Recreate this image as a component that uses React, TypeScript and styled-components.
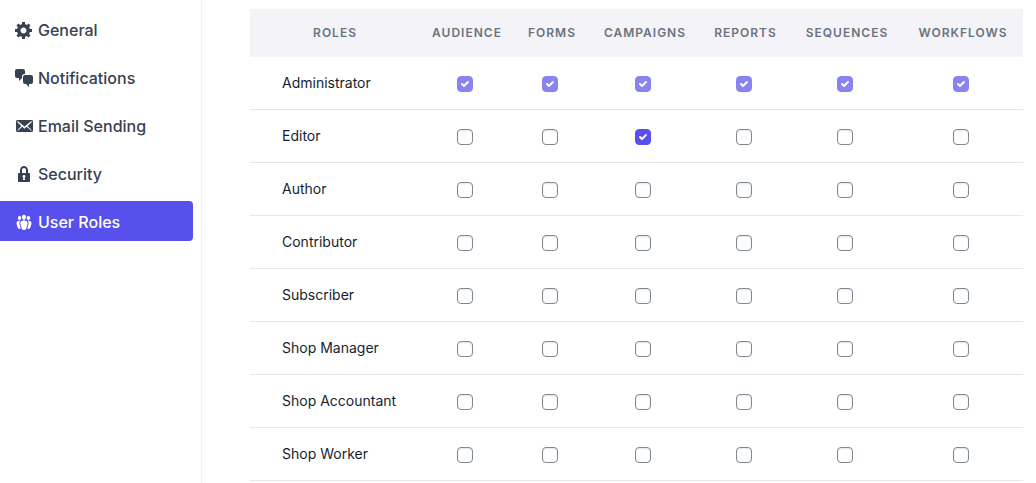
import React, { useState } from "react";
import styled, { createGlobalStyle } from "styled-components";

const GlobalStyle = createGlobalStyle`
  *, *::before, *::after { box-sizing: border-box; }
  body {
    margin: 0;
    background: #ffffff;
    color: #252f3f;
    font-family: Inter, "Liberation Sans", sans-serif;
  }
`;

const Page = styled.div`
  display: flex;
  min-height: 100vh;
`;

const Sidebar = styled.nav`
  flex: 0 0 202px;
  display: flex;
  flex-direction: column;
  gap: 8px;
  padding: 9px 8px 0 0;
  border-right: 1px solid #f1f1f5;
`;

const NavLink = styled.a<{ $active: boolean }>`
  display: flex;
  align-items: center;
  gap: 4px;
  height: 40px;
  padding: 2px 14px 0;
  border-radius: 0 4px 4px 0;
  background: ${(p) => (p.$active ? "#5850ec" : "transparent")};
  color: ${(p) => (p.$active ? "#ffffff" : "#374151")};
  font-size: 16px;
  font-weight: 500;
  line-height: 24px;
  text-decoration: none;
`;

const NavIcon = styled.svg`
  flex: none;
  width: 20px;
  height: 20px;
  fill: currentColor;
`;

const Main = styled.main`
  flex: 1;
  min-width: 0;
  padding: 9px 13px 0 48px;
`;

const RolesTable = styled.table`
  width: 100%;
  table-layout: fixed;
  border-collapse: separate;
  border-spacing: 0;
`;

const Column = styled.col<{ $width: number }>`
  width: ${(p) => p.$width}px;
`;

const HeadCell = styled.th`
  height: 48px;
  padding: 0;
  background: #f4f4f8;
  color: #6b7280;
  font-size: 12px;
  font-weight: 600;
  line-height: 16px;
  letter-spacing: 1px;
  text-align: center;
  text-transform: uppercase;
`;

const RoleName = styled.th`
  height: 53px;
  padding: 0 0 0 32px;
  border-bottom: 1px solid #e5e7eb;
  color: #161e2e;
  font-size: 14px;
  font-weight: 400;
  line-height: 20px;
  text-align: left;
`;

const CheckCell = styled.td`
  height: 53px;
  padding: 2px 4px 0 0;
  border-bottom: 1px solid #e5e7eb;
`;

const CheckWrap = styled.span`
  display: grid;
  justify-content: center;
  align-items: center;

  > * {
    grid-area: 1 / 1;
  }
`;

const CheckInput = styled.input`
  appearance: none;
  width: 16px;
  height: 16px;
  margin: 0;
  border: 1px solid #7e8993;
  border-radius: 4px;
  background: #ffffff;
  box-shadow: inset 0 1px 2px rgba(0, 0, 0, 0.1);

  &:checked {
    border-color: #5850ec;
    background: #5850ec;
    box-shadow: none;
  }

  &:disabled {
    opacity: 0.7;
  }
`;

const CheckMark = styled.svg`
  z-index: 1;
  width: 16px;
  height: 16px;
  fill: #ffffff;
  pointer-events: none;
`;

const navItems = [
  {
    label: "General",
    path: "M18 12h-2.18c-.17.7-.44 1.35-.81 1.93l1.54 1.54-2.1 2.1-1.54-1.54c-.58.36-1.23.63-1.91.79V19H8v-2.18c-.68-.16-1.33-.43-1.91-.79l-1.54 1.54-2.12-2.12 1.54-1.54c-.36-.58-.63-1.23-.79-1.91H1V9.03h2.17c.16-.7.44-1.35.8-1.94L2.43 5.55l2.1-2.1 1.54 1.54c.58-.37 1.24-.64 1.93-.81V2h3v2.18c.68.16 1.33.43 1.91.79l1.54-1.54 2.12 2.12-1.54 1.54c.36.59.64 1.24.8 1.94H18V12zm-8.5 1.5c1.66 0 3-1.34 3-3s-1.34-3-3-3-3 1.34-3 3 1.34 3 3 3z",
  },
  {
    label: "Notifications",
    path: "M11 6h-.82C9.07 6 8 7.2 8 8.16V10l-3 3v-3H3c-1.1 0-2-.9-2-2V3c0-1.1.9-2 2-2h6c1.1 0 2 .9 2 2v3zm0 1h6c1.1 0 2 .9 2 2v5c0 1.1-.9 2-2 2h-2v3l-3-3h-1c-1.1 0-2-.9-2-2V9c0-1.1.9-2 2-2z",
  },
  {
    label: "Email Sending",
    path: "M19 14.5v-9c0-.83-.67-1.5-1.5-1.5H3.49c-.83 0-1.5.67-1.5 1.5v9c0 .83.67 1.5 1.5 1.5H17.5c.83 0 1.5-.67 1.5-1.5zm-1.31-9.11c.33.33.15.67-.03.84L13.6 9.95l3.9 4.06c.12.14.2.36.06.51-.13.16-.43.15-.56.05l-4.37-3.73-2.14 1.95-2.13-1.95-4.37 3.73c-.13.1-.43.11-.56-.05-.14-.15-.06-.37.06-.51l3.9-4.06-4.06-3.72c-.18-.17-.36-.51-.03-.84s.67-.17.95.07l6.24 5.04 6.25-5.04c.28-.24.62-.4.95-.07z",
  },
  {
    label: "Security",
    path: "M14 9h1c.55 0 1 .45 1 1v7c0 .55-.45 1-1 1H5c-.55 0-1-.45-1-1v-7c0-.55.45-1 1-1h1V6c0-2.21 1.79-4 4-4s4 1.79 4 4v3zm-2 0V6c0-1.1-.9-2-2-2s-2 .9-2 2v3h4zm-1 7l-.36-2.15c.51-.24.86-.75.86-1.35 0-.83-.67-1.5-1.5-1.5s-1.5.67-1.5 1.5c0 .6.35 1.11.86 1.35L9 16h2z",
  },
  {
    label: "User Roles",
    active: true,
    path: "M8.03 4.46c-.29 1.28.55 3.46 1.97 3.46 1.41 0 2.25-2.18 1.96-3.46-.22-.98-1.08-1.63-1.96-1.63-.89 0-1.74.65-1.97 1.63zm-4.13.9c-.25 1.08.47 2.93 1.67 2.93s1.92-1.85 1.67-2.93c-.19-.83-.92-1.39-1.67-1.39s-1.48.56-1.67 1.39zm8.86 0c-.25 1.08.47 2.93 1.66 2.93 1.2 0 1.92-1.85 1.67-2.93-.19-.83-.92-1.39-1.67-1.39-.74 0-1.47.56-1.66 1.39zm-.59 11.43l1.25-4.3C14.2 10 12.71 8.47 10 8.47c-2.72 0-4.21 1.53-3.44 4.02l1.26 4.3C8.05 17.51 9 18 10 18c.98 0 1.94-.49 2.17-1.21zm-6.1-7.63c-.49.67-.96 1.83-.42 3.59l1.12 3.79c-.34.2-.77.31-1.2.31-.85 0-1.65-.41-1.85-1.03l-1.07-3.65c-.65-2.11.61-3.4 2.92-3.4.27 0 .54.02.79.06-.1.1-.2.22-.29.33zm8.35-.39c2.31 0 3.58 1.29 2.92 3.4l-1.07 3.65c-.2.62-1 1.03-1.85 1.03-.43 0-.86-.11-1.2-.31l1.11-3.77c.55-1.78.08-2.94-.42-3.61-.08-.11-.18-.23-.28-.33.25-.04.51-.06.79-.06z",
  },
];

const permissions = [
  { name: "Audience", width: 94 },
  { name: "Forms", width: 76 },
  { name: "Campaigns", width: 110 },
  { name: "Reports", width: 91 },
  { name: "Sequences", width: 112 },
  { name: "Workflows", width: 120 },
];

const roles = [
  "Administrator",
  "Editor",
  "Author",
  "Contributor",
  "Subscriber",
  "Shop Manager",
  "Shop Accountant",
  "Shop Worker",
];

interface PermissionCheckProps {
  label: string;
  locked: boolean;
  checked: boolean;
  onToggle: () => void;
}

function PermissionCheck({ label, locked, checked, onToggle }: PermissionCheckProps) {
  return (
    <CheckWrap>
      <CheckInput
        type="checkbox"
        aria-label={label}
        checked={checked}
        disabled={locked}
        onChange={onToggle}
      />
      {checked && (
        <CheckMark viewBox="0 0 16 16" aria-hidden="true">
          <path d="M5.707 7.293a1 1 0 0 0-1.414 1.414l2 2a1 1 0 0 0 1.414 0l4-4a1 1 0 0 0-1.414-1.414L7 8.586 5.707 7.293z" />
        </CheckMark>
      )}
    </CheckWrap>
  );
}

export default function App() {
  const [granted, setGranted] = useState<string[]>(["Editor: Campaigns"]);

  const toggle = (key: string) =>
    setGranted((prev) =>
      prev.includes(key) ? prev.filter((k) => k !== key) : [...prev, key]
    );

  return (
    <>
      <GlobalStyle />
      <Page>
        <Sidebar aria-label="Settings">
          {navItems.map((item) => (
            <NavLink
              key={item.label}
              href="#"
              $active={!!item.active}
              aria-current={item.active ? "page" : undefined}
            >
              <NavIcon viewBox="0 0 20 20" aria-hidden="true">
                <path d={item.path} />
              </NavIcon>
              {item.label}
            </NavLink>
          ))}
        </Sidebar>
        <Main>
          <RolesTable>
            <colgroup>
              <Column $width={170} />
              {permissions.map((p) => (
                <Column key={p.name} $width={p.width} />
              ))}
            </colgroup>
            <thead>
              <tr>
                <HeadCell scope="col">Roles</HeadCell>
                {permissions.map((p) => (
                  <HeadCell key={p.name} scope="col">
                    {p.name}
                  </HeadCell>
                ))}
              </tr>
            </thead>
            <tbody>
              {roles.map((role) => (
                <tr key={role}>
                  <RoleName scope="row">{role}</RoleName>
                  {permissions.map((p) => {
                    const key = `${role}: ${p.name}`;
                    const locked = role === "Administrator";
                    return (
                      <CheckCell key={p.name}>
                        <PermissionCheck
                          label={key}
                          locked={locked}
                          checked={locked || granted.includes(key)}
                          onToggle={() => toggle(key)}
                        />
                      </CheckCell>
                    );
                  })}
                </tr>
              ))}
            </tbody>
          </RolesTable>
        </Main>
      </Page>
    </>
  );
}
